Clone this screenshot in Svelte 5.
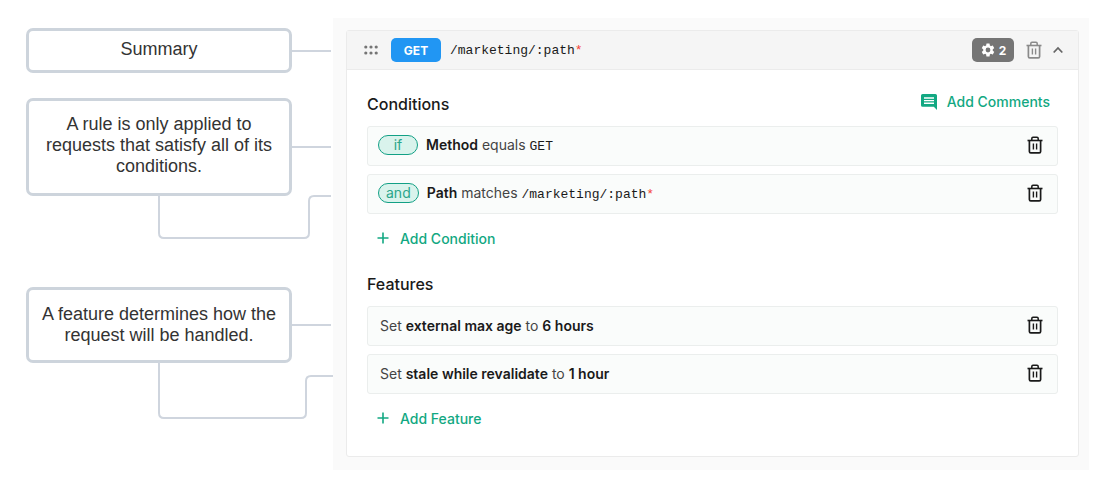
<script>
  const conditions = [
    { join: 'if', subject: 'Method', verb: 'equals', value: 'GET', wildcard: '' },
    { join: 'and', subject: 'Path', verb: 'matches', value: '/marketing/:path', wildcard: '*' }
  ];
  const features = [
    { name: 'external max age', value: '6 hours' },
    { name: 'stale while revalidate', value: '1 hour' }
  ];
</script>

{#snippet trash()}
  <svg width="16" height="18" viewBox="0 0 16 18" fill="none" stroke="currentColor" aria-hidden="true">
    <path d="M.5 4.5h15" stroke-width="1.6" />
    <path d="M4.8 4V2.4Q4.8 1.2 6 1.2h4q1.2 0 1.2 1.2V4" stroke-width="1.5" />
    <path d="M2.4 4.5v11q0 1.4 1.4 1.4h8.4q1.4 0 1.4-1.4v-11" stroke-width="1.7" />
    <path d="M6.4 7.5v6M9.6 7.5v6" stroke-width="1.4" />
  </svg>
{/snippet}

{#snippet plus()}
  <svg width="12" height="12" viewBox="0 0 12 12" fill="none" stroke="currentColor" stroke-width="1.6" aria-hidden="true">
    <path d="M6 .5v11M.5 6h11" />
  </svg>
{/snippet}

<main class="page">
  <aside class="notes">
    <div class="note summary">
      <p>Summary</p>
      <span class="line"></span>
    </div>
    <div class="note rule">
      <p>A rule is only applied to requests that satisfy all of its conditions.</p>
      <span class="line"></span>
      <svg class="elbow" width="174" height="48" viewBox="0 0 174 48" aria-hidden="true">
        <path d="M1 2v38q0 5 5 5h140q5 0 5-5V8q0-5 5-5h17" />
      </svg>
    </div>
    <div class="note feature">
      <p>A feature determines how the request will be handled.</p>
      <span class="line"></span>
      <svg class="elbow" width="175" height="62" viewBox="0 0 175 62" aria-hidden="true">
        <path d="M1 2v51q0 5 5 5h137q5 0 5-5V21q0-5 5-5h22" />
      </svg>
    </div>
  </aside>

  <section class="panel">
    <article class="card">
      <header class="bar">
        <svg class="grip" width="14" height="10" viewBox="0 0 14 10" fill="currentColor" aria-hidden="true">
          <circle cx="1.8" cy="2" r="1.6" /><circle cx="7" cy="2" r="1.6" /><circle cx="12.2" cy="2" r="1.6" />
          <circle cx="1.8" cy="8" r="1.6" /><circle cx="7" cy="8" r="1.6" /><circle cx="12.2" cy="8" r="1.6" />
        </svg>
        <span class="method">GET</span>
        <code>/marketing/:path<i>*</i></code>
        <span class="count">
          <svg width="16" height="16" viewBox="0 0 24 24" fill="currentColor" aria-hidden="true">
            <path d="M19.14 12.94c.04-.3.06-.61.06-.94 0-.32-.02-.64-.07-.94l2.03-1.58a.49.49 0 0 0 .12-.61l-1.92-3.32a.49.49 0 0 0-.59-.22l-2.39.96c-.5-.38-1.03-.7-1.62-.94l-.36-2.54a.48.48 0 0 0-.48-.41h-3.84a.47.47 0 0 0-.47.41l-.36 2.54c-.59.24-1.13.57-1.62.94l-2.39-.96a.48.48 0 0 0-.59.22L2.74 8.87a.48.48 0 0 0 .12.61l2.03 1.58c-.05.3-.09.63-.09.94s.02.64.07.94l-2.03 1.58a.49.49 0 0 0-.12.61l1.92 3.32c.12.22.37.29.59.22l2.39-.96c.5.38 1.03.7 1.62.94l.36 2.54c.05.24.24.41.48.41h3.84c.24 0 .44-.17.47-.41l.36-2.54c.59-.24 1.13-.56 1.62-.94l2.39.96c.22.08.47 0 .59-.22l1.92-3.32a.47.47 0 0 0-.12-.61l-2.01-1.58zM12 15.6A3.6 3.6 0 1 1 12 8.4a3.6 3.6 0 0 1 0 7.2z" />
          </svg>
          2
        </span>
        <button class="icon muted" aria-label="Delete rule">{@render trash()}</button>
        <button class="icon chevron" aria-label="Collapse rule">
          <svg width="10" height="8" viewBox="0 0 10 8" fill="none" stroke="currentColor" stroke-width="1.8" aria-hidden="true">
            <path d="M.7 6.5 5 2l4.3 4.5" />
          </svg>
        </button>
      </header>

      <div class="body">
        <div class="head">
          <h2>Conditions</h2>
          <button class="link comments">
            <svg width="16" height="16" viewBox="0 0 16 16" aria-hidden="true">
              <path fill="currentColor" d="M1.6 0h12.8Q16 0 16 1.6V16l-3.2-3.2H1.6Q0 12.8 0 11.2V1.6Q0 0 1.6 0z" />
              <path stroke="#fff" stroke-width="1.4" d="M3 4h10M3 6.6h10M3 9.2h10" />
            </svg>
            Add Comments
          </button>
        </div>
        <ul>
          {#each conditions as c}
            <li>
              <span class="pill">{c.join}</span>
              <span class="text"><b>{c.subject}</b> {c.verb} <code>{c.value}{#if c.wildcard}<i>{c.wildcard}</i>{/if}</code></span>
              <button class="icon" aria-label="Delete condition">{@render trash()}</button>
            </li>
          {/each}
        </ul>
        <button class="link add">{@render plus()}Add Condition</button>

        <div class="head"><h2>Features</h2></div>
        <ul>
          {#each features as f}
            <li>
              <span class="text set">Set <b>{f.name}</b> to <b>{f.value}</b></span>
              <button class="icon" aria-label="Delete feature">{@render trash()}</button>
            </li>
          {/each}
        </ul>
        <button class="link add">{@render plus()}Add Feature</button>
      </div>
    </article>
  </section>
</main>

<style>
  :global(body) {
    margin: 0;
    background: #fff;
  }
  .page {
    display: flex;
    align-items: flex-start;
    gap: 41px;
    padding: 18px 22px 18px 26px;
    font-family: Inter, sans-serif;
    font-size: 14px;
    color: #1a1a1a;
  }
  .notes {
    flex: 0 0 266px;
    padding-top: 10px;
  }
  .note {
    position: relative;
    box-sizing: border-box;
    border: 3px solid #cdd4dc;
    border-radius: 7px;
    padding: 13px 12px 16px;
    font: 18px/21px 'Liberation Sans', Arial, sans-serif;
    color: #333;
    text-align: center;
  }
  .note p {
    margin: 0;
  }
  .summary {
    padding: 8px 12px 10px;
  }
  .rule {
    margin-top: 25px;
  }
  .feature {
    margin-top: 91px;
    padding: 14px 12px;
  }
  .line {
    position: absolute;
    left: 100%;
    top: 50%;
    width: 39px;
    height: 2px;
    margin-top: -1px;
    margin-left: 3px;
    background: #cfd5de;
  }
  .elbow {
    position: absolute;
    left: 129px;
    top: 100%;
    fill: none;
    stroke: #cfd5de;
    stroke-width: 2;
  }
  .panel {
    flex: 1;
    min-width: 0;
    background: #fafafa;
    padding: 12px 10px 13px 13px;
  }
  .card {
    border: 1px solid #ebebeb;
    border-radius: 3px;
    background: #fff;
  }
  .bar {
    display: flex;
    align-items: center;
    height: 38px;
    padding: 0 15px 0 17px;
    border-bottom: 1px solid #ebebeb;
    background: #f5f5f5;
  }
  .grip {
    color: #757575;
    margin-right: 13px;
  }
  .method,
  .count {
    display: flex;
    align-items: center;
    justify-content: center;
    height: 24px;
    border-radius: 5px;
    color: #fff;
    font-size: 12px;
    font-weight: 700;
  }
  .method {
    width: 50px;
    margin-right: 9px;
    background: #2196f3;
  }
  .count {
    width: 42px;
    gap: 3px;
    margin-left: auto;
    margin-right: 12px;
    background: #757575;
  }
  code {
    font-family: 'Liberation Mono', 'Courier New', monospace;
    font-size: 13px;
    color: #1a1a1a;
  }
  code i {
    font-style: normal;
    color: #f44336;
  }
  button {
    display: flex;
    align-items: center;
    padding: 0;
    border: 0;
    background: none;
    font: inherit;
    color: inherit;
    cursor: pointer;
  }
  .icon {
    margin-left: auto;
  }
  .icon.muted,
  .icon.chevron {
    margin-left: 0;
    color: #8a8a8a;
  }
  .icon.chevron {
    margin-left: 11px;
    color: #666;
  }
  .body {
    padding: 12px 20px 14px;
  }
  .head {
    display: flex;
    align-items: center;
    justify-content: space-between;
    height: 44px;
  }
  h2 {
    margin: 0;
    font-size: 16px;
    font-weight: 500;
  }
  .link {
    color: #12a882;
    font-weight: 500;
  }
  .comments {
    gap: 10px;
    padding: 0 8px 5px 0;
  }
  .add {
    gap: 11px;
    height: 46px;
    margin: 1px 0;
    padding-left: 10px;
  }
  ul {
    display: grid;
    gap: 8px;
    margin: 0;
    padding: 0;
    list-style: none;
  }
  li {
    display: flex;
    align-items: center;
    box-sizing: border-box;
    height: 40px;
    padding: 0 14px 2px 10px;
    border: 1px solid #ebeeed;
    border-radius: 3px;
    background: #fafcfb;
  }
  .pill {
    box-sizing: border-box;
    min-width: 40px;
    height: 20px;
    margin-right: 8px;
    padding: 0 7px;
    border: 1px solid #12a085;
    border-radius: 10px;
    background: #d9f3ec;
    color: #2ba58a;
    line-height: 18px;
    text-align: center;
  }
  .text {
    color: #444;
  }
  .text.set {
    padding-left: 2px;
  }
  b {
    font-weight: 600;
    color: #1a1a1a;
  }
</style>
